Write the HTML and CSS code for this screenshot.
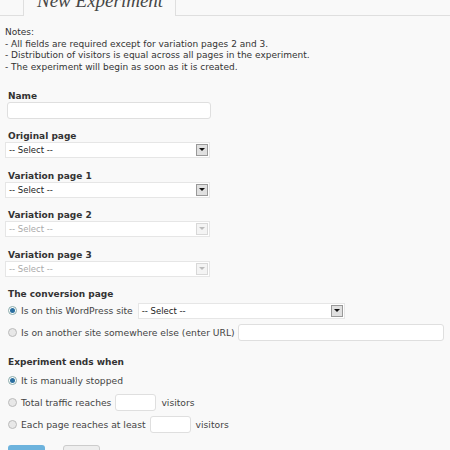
FILE: index.html
```html
<!DOCTYPE html>
<html>
<head>
<meta charset="utf-8">
<link rel="stylesheet" href="styles.css">
</head>
<body>
<div class="tabs">
  <div class="tab-gap"></div>
  <div class="tab"><span class="tab-title">New Experiment</span></div>
  <div class="tab-rest"></div>
</div>
<div class="content">
  <div class="notes">
    <div>Notes:</div>
    <div>- All fields are required except for variation pages 2 and 3.</div>
    <div>- Distribution of visitors is equal across all pages in the experiment.</div>
    <div>- The experiment will begin as soon as it is created.</div>
  </div>

  <div class="field">
    <div class="label">Name</div>
    <div class="input name-input"></div>
  </div>
  <div class="field">
    <div class="label">Original page</div>
    <div class="select"><span>-- Select --</span><span class="arrow"></span></div>
  </div>
  <div class="field">
    <div class="label">Variation page 1</div>
    <div class="select"><span>-- Select --</span><span class="arrow"></span></div>
  </div>
  <div class="field">
    <div class="label">Variation page 2</div>
    <div class="select disabled"><span>-- Select --</span><span class="arrow"></span></div>
  </div>
  <div class="field">
    <div class="label">Variation page 3</div>
    <div class="select disabled"><span>-- Select --</span><span class="arrow"></span></div>
  </div>

  <div class="group conv">
    <div class="label">The conversion page</div>
    <div class="row row-tall">
      <span class="radio checked"></span><span class="rtext">Is on this WordPress site</span>
      <div class="select conv-select"><span>-- Select --</span><span class="arrow"></span></div>
    </div>
    <div class="row row-tall">
      <span class="radio"></span><span class="rtext">Is on another site somewhere else (enter URL)</span>
      <div class="input url-input"></div>
    </div>
  </div>

  <div class="group ends">
    <div class="label">Experiment ends when</div>
    <div class="row row-short">
      <span class="radio checked"></span><span class="rtext">It is manually stopped</span>
    </div>
    <div class="row row-tall r2">
      <span class="radio"></span><span class="rtext">Total traffic reaches</span>
      <div class="input small-input"></div><span class="rtext">visitors</span>
    </div>
    <div class="row row-tall r3">
      <span class="radio"></span><span class="rtext">Each page reaches at least</span>
      <div class="input small-input"></div><span class="rtext">visitors</span>
    </div>
  </div>

  <div class="buttons">
    <span class="btn primary"></span>
    <span class="btn secondary"></span>
  </div>
</div>
</body>
</html>
```
FILE: styles.css
```css
html, body {
  margin: 0;
  padding: 0;
  background: #f9f9f9;
  overflow: hidden;
}
body {
  font-family: "DejaVu Sans", Verdana, sans-serif;
  font-size: 9px;
  color: #333;
  width: 450px;
  height: 450px;
}
.tabs {
  display: flex;
  height: 16px;
  align-items: stretch;
}
.tab-gap {
  width: 23px;
  border-bottom: 1px solid #dfdfdf;
}
.tab {
  width: 151px;
  border: 1px solid #dfdfdf;
  border-top: none;
  border-bottom: none;
  position: relative;
  overflow: hidden;
}
.tab-title {
  position: absolute;
  left: 13px;
  bottom: 6px;
  font-family: "Liberation Serif", "Times New Roman", serif;
  font-style: italic;
  font-size: 19px;
  line-height: 19px;
  color: #464646;
  white-space: nowrap;
}
.tab-rest {
  flex: 1;
  border-bottom: 1px solid #dfdfdf;
}
.content {
  padding: 11px 0 0 5px;
}
.notes {
  line-height: 11.7px;
  color: #333;
  margin-bottom: 16px;
}
.label {
  font-weight: bold;
  line-height: 12px;
  padding-left: 3px;
  color: #333;
}
.field {
  margin-bottom: 11.5px;
}
.input {
  background: #fff;
  border: 1px solid #dfdfdf;
  border-radius: 3px;
  box-sizing: border-box;
  height: 17px;
}
.name-input {
  width: 204px;
  margin-left: 2px;
}
.select {
  display: flex;
  align-items: center;
  justify-content: space-between;
  width: 205px;
  height: 16px;
  box-sizing: border-box;
  background: #fff;
  border: 1px solid #e6e6e6;
  padding-left: 3px;
  padding-right: 1px;
  color: #222;
  font-size: 8.5px;
}
.select .arrow {
  width: 10px;
  height: 10px;
  background: #e0e0e0;
  border: 1px solid #999;
  position: relative;
}
.select .arrow::after {
  content: "";
  position: absolute;
  left: 2px;
  top: 3px;
  border-left: 3px solid transparent;
  border-right: 3px solid transparent;
  border-top: 3px solid #111;
}
.select.disabled {
  color: #aaa;
}
.select.disabled .arrow {
  background: #f4f4f4;
  border-color: #d8d8d8;
}
.select.disabled .arrow::after {
  border-top-color: #bbb;
}
.group {
  margin-top: 1px;
}
.group .label {
  margin-bottom: 2px;
}
.row {
  display: flex;
  align-items: center;
  padding-left: 3px;
  color: #444;
  font-size: 9.2px;
}
.row-tall {
  height: 17px;
  margin-bottom: 5px;
}
.row-short {
  height: 12px;
  margin-bottom: 8px;
}
.ends {
  margin-top: 15px;
}
.ends .label {
  margin-bottom: 6px;
}
.r3 {
  margin-top: 2px;
}
.radio {
  width: 7px;
  height: 7px;
  border-radius: 50%;
  border: 1px solid #bbb;
  background: #e8e8e8;
  margin-right: 4px;
  position: relative;
  flex: none;
}
.radio.checked {
  border-color: #8aa;
  background: #fff;
}
.radio.checked::after {
  content: "";
  position: absolute;
  left: 1px;
  top: 1px;
  width: 5px;
  height: 5px;
  border-radius: 50%;
  background: #2a6fa0;
}
.rtext {
  white-space: nowrap;
}
.conv-select {
  margin-left: 5px;
  width: 207px;
  font-size: 8.5px;
}
.url-input {
  margin-left: 3px;
  width: 206px;
}
.small-input {
  width: 41px;
  margin: 0 5px 0 4px;
}
.buttons {
  display: flex;
  gap: 18px;
  padding-left: 3px;
  margin-top: 12px;
}
.btn {
  display: block;
  height: 16px;
  border-radius: 3px;
}
.btn.primary {
  width: 37px;
  background: #6db3dd;
}
.btn.secondary {
  width: 35px;
  background: #eee;
  border: 1px solid #ccc;
}
```
